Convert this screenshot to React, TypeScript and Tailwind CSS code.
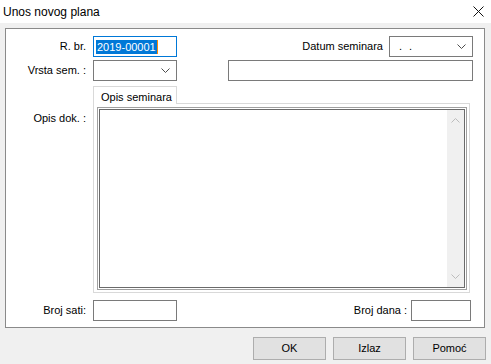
import React from 'react';

const Chevron: React.FC<{ up?: boolean; color?: string }> = ({ up, color = '#4d4d4d' }) => (
  <svg width="9" height="5" viewBox="0 0 9 5" className="block">
    <polyline
      points={up ? '0.5,4.5 4.5,0.5 8.5,4.5' : '0.5,0.5 4.5,4.5 8.5,0.5'}
      fill="none"
      stroke={color}
      strokeWidth="1"
    />
  </svg>
);

const Select: React.FC<{ width: string; value?: string }> = ({ width, value }) => (
  <div className={`${width} h-[21px] border border-[#7a7a7a] bg-white flex items-center justify-between pl-[9px] pr-[6px]`}>
    <span className="text-[11px] text-black tracking-[2px]">{value}</span>
    <Chevron />
  </div>
);

const Label: React.FC<{ children: React.ReactNode }> = ({ children }) => (
  <div className="w-[80px] text-right text-[11px] text-black leading-none">{children}</div>
);

const App: React.FC = () => {
  return (
    <div
      className="w-[491px] h-[364px] bg-[#f0f0f0] overflow-hidden text-black"
      style={{ fontFamily: '"Liberation Sans", Arial, sans-serif' }}
    >
      {/* title bar */}
      <div className="h-[23px] bg-white flex items-center justify-between pl-[3px] pr-[7px]">
        <span className="text-[12px] pt-px">Unos novog plana</span>
        <svg width="11" height="11" viewBox="0 0 11 11">
          <path d="M0.5 0.5 L10.5 10.5 M10.5 0.5 L0.5 10.5" stroke="#111" strokeWidth="1" />
        </svg>
      </div>

      {/* group box */}
      <div className="ml-[5px] mt-[5px] w-[480px] h-[300px] border border-[#8a8a8a] bg-white flex flex-col pt-[7px]">
        {/* row 1 */}
        <div className="flex items-center h-[21px] pr-[11px]">
          <Label>R. br.</Label>
          <div className="ml-[7px] w-[84px] h-[21px] border border-[#0078d7] bg-white flex items-center pl-[2px]">
            <span className="bg-[#0078d7] text-white text-[11px] leading-[14px] px-px">2019-00001</span>
            <span className="w-px h-[14px] bg-[#ff8a00]" />
          </div>
          <div className="flex-1" />
          <span className="text-[11px]">Datum seminara</span>
          <div className="ml-[6px]">
            <Select width="w-[84px]" value=". ." />
          </div>
        </div>

        {/* row 2 */}
        <div className="flex items-center h-[21px] mt-[3px] pr-[11px]">
          <Label>Vrsta sem. :</Label>
          <div className="ml-[7px]">
            <Select width="w-[84px]" />
          </div>
          <div className="ml-[51px] flex-1 h-[21px] border border-[#7a7a7a] bg-white" />
        </div>

        {/* row 3: tabs */}
        <div className="flex mt-[5px]">
          <div className="w-[80px] pt-[27px] text-right text-[11px] leading-none">Opis dok. :</div>
          <div className="ml-[7px] w-[377px] flex flex-col">
            <div className="flex">
              <div className="relative z-10 -mb-px w-[84px] h-[18px] bg-white border-x border-t border-[#d9d9d9] pl-[7px] pt-[2px] text-[11px]">
                Opis seminara
              </div>
            </div>
            <div className="h-[190px] border border-[#d9d9d9] bg-white pt-[3px] pl-[3px] pr-[2px] pb-[2px]">
              <div className="h-full border border-[#a0a0a0] p-px">
                <div className="h-full border border-[#6a6a6a] flex justify-end">
                  <div className="w-[17px] h-full bg-[#f0f0f0] flex flex-col items-center justify-between pt-[8px] pb-[8px]">
                    <Chevron up color="#bcbcbc" />
                    <Chevron color="#bcbcbc" />
                  </div>
                </div>
              </div>
            </div>
          </div>
        </div>

        {/* row 4 */}
        <div className="flex items-center h-[21px] mt-[7px] pr-[13px]">
          <Label>Broj sati:</Label>
          <div className="ml-[7px] w-[84px] h-[21px] border border-[#7a7a7a] bg-white" />
          <div className="flex-1" />
          <span className="text-[11px]">Broj dana :</span>
          <div className="ml-[4px] w-[60px] h-[21px] border border-[#7a7a7a] bg-white" />
        </div>
      </div>

      {/* buttons */}
      <div className="flex justify-end gap-[7px] mt-[9px] pr-[5px]">
        {['OK', 'Izlaz', 'Pomoć'].map((t) => (
          <div
            key={t}
            className="w-[73px] h-[23px] bg-[#e1e1e1] border border-[#adadad] flex items-center justify-center text-[11px]"
          >
            {t}
          </div>
        ))}
      </div>
    </div>
  );
};

export default App;
